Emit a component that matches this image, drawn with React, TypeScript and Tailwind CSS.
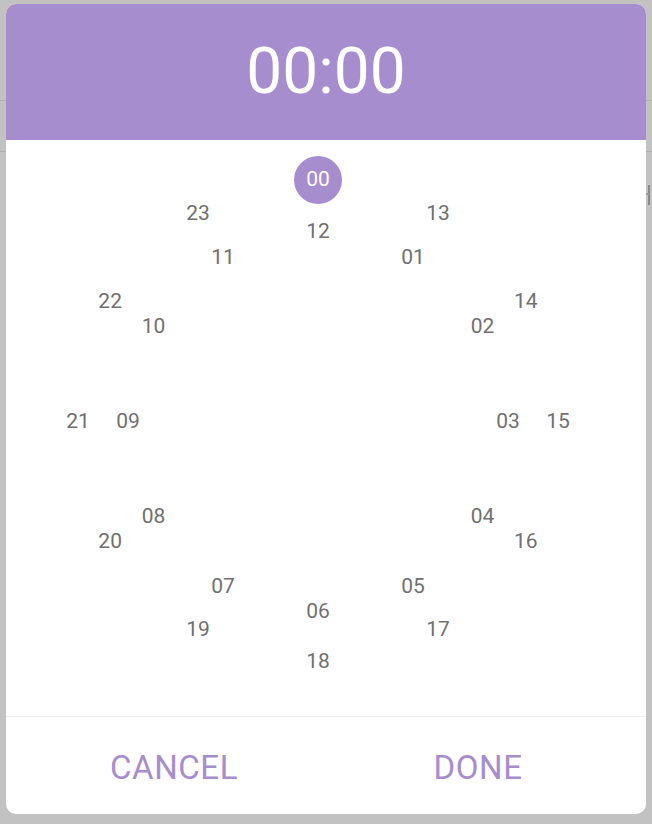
import React from "react";

const PURPLE = "#a68dcd";

function Num({ label, angle, r, selected }: { label: string; angle: number; r: number; selected?: boolean }) {
  const rad = (angle * Math.PI) / 180;
  const x = 312 + r * Math.sin(rad);
  const y = 280 - r * Math.cos(rad);
  return (
    <div
      className={
        "absolute flex items-center justify-center rounded-full w-[48px] h-[48px] -ml-[24px] " +
        (selected ? "bg-[#a68dcd] text-white -mt-[24px] text-[21px]" : "text-[#707070] -mt-[22px] text-[21px]")
      }
      style={{ left: x, top: y }}
    >
      {label}
    </div>
  );
}

export default function App() {
  const outer = ["00", "13", "14", "15", "16", "17", "18", "19", "20", "21", "22", "23"];
  const inner = ["12", "01", "02", "03", "04", "05", "06", "07", "08", "09", "10", "11"];
  return (
    <div
      className="relative w-[652px] h-[824px] bg-[#c2c2c2] overflow-hidden"
      style={{ fontFamily: "Roboto, 'Noto Sans', sans-serif" }}
    >
      <div className="absolute left-0 right-0 top-[100px] h-px bg-[#b0b0b0]" />
      <div className="absolute left-0 right-0 top-[151px] h-px bg-[#b0b0b0]" />
      <div className="absolute left-[648px] top-[185px] w-[2px] h-[20px] bg-[#8a8a8a]" />
      <div className="absolute left-[646px] top-[193px] w-[3px] h-[2px] bg-[#9a9a9a]" />

      <div className="relative pt-[4px] pl-[6px]">
        <div className="w-[640px] h-[810px] bg-white rounded-[10px] overflow-hidden flex flex-col">
          <div className="h-[136px] bg-[#a68dcd] flex items-center justify-center">
            <span className="text-white text-[64px] leading-none">00:00</span>
          </div>
          <div className="relative h-[576px]">
            {outer.map((l, i) => (
              <Num key={l} label={l} angle={i * 30} r={240} selected={i === 0} />
            ))}
            {inner.map((l, i) => (
              <Num key={l} label={l} angle={i * 30} r={190} />
            ))}
          </div>
          <div className="h-px bg-[#efefef]" />
          <div className="flex-1 grid grid-cols-2 px-4 pt-[5px]">
            <div className="flex items-center justify-center">
              <span className="text-[33px] tracking-[0.6px]" style={{ color: PURPLE }}>CANCEL</span>
            </div>
            <div className="flex items-center justify-center">
              <span className="text-[33px] tracking-[0.6px]" style={{ color: PURPLE }}>DONE</span>
            </div>
          </div>
        </div>
      </div>
    </div>
  );
}
